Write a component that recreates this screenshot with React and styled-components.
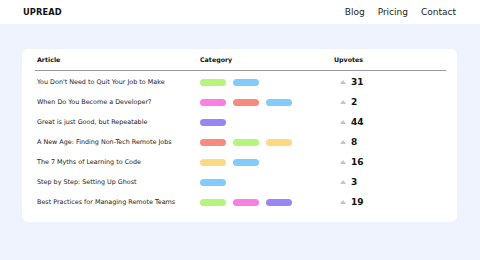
import React from "react";
import styled, { createGlobalStyle } from "styled-components";

const Global = createGlobalStyle`
  html, body { margin: 0; padding: 0; }
  body {
    background: #eff3fd;
    font-family: "DejaVu Sans", "Open Sans", sans-serif;
    color: #111;
    width: 480px;
    height: 260px;
    overflow: hidden;
  }
`;

const Header = styled.header`
  height: 24px;
  background: #fff;
  display: flex;
  align-items: center;
  justify-content: space-between;
  padding: 0 24px 0 23px;
`;

const Logo = styled.div`
  font-weight: 700;
  font-size: 8.3px;
  letter-spacing: 0.1px;
`;

const Nav = styled.nav`
  display: flex;
  gap: 13px;
  font-size: 9px;
  color: #222;
`;

const Main = styled.main`
  padding: 25px 23px 0 22px;
`;

const Card = styled.section`
  background: #fff;
  border-radius: 6px;
  padding: 0 11px 10px 13px;
`;

const Row = styled.div`
  display: grid;
  grid-template-columns: 163px 134px 1fr;
  align-items: center;
  height: ${(p) => (p.$head ? "21px" : "20px")};
  padding-left: 2px;
  ${(p) => p.$head && "border-bottom: 1px solid #9a9a9a; margin-bottom: 1px;"}
`;

const HeadCell = styled.div`
  font-size: 6.3px;
  font-weight: 700;
`;

const Title = styled.div`
  font-size: 6.4px;
  color: #1a1a1a;
  white-space: nowrap;
`;

const Tags = styled.div`
  display: flex;
  gap: 7px;
`;

const Pill = styled.span`
  width: 26px;
  height: 7px;
  border-radius: 4px;
  background: ${(p) => p.$c};
`;

const Votes = styled.div`
  display: flex;
  align-items: center;
  gap: 5px;
  padding-left: 6px;
`;

const Arrow = styled.span`
  width: 0;
  height: 0;
  border-left: 3.5px solid transparent;
  border-right: 3.5px solid transparent;
  border-bottom: 4px solid #c4c4c4;
`;

const Count = styled.span`
  font-size: 9px;
  font-weight: 700;
`;

const C = {
  green: "#b5f57c",
  blue: "#82cbfc",
  pink: "#fb7fe1",
  red: "#f88a7f",
  purple: "#9b85f5",
  yellow: "#fdd983",
};

const rows = [
  ["You Don't Need to Quit Your Job to Make", ["green", "blue"], 31],
  ["When Do You Become a Developer?", ["pink", "red", "blue"], 2],
  ["Great is just Good, but Repeatable", ["purple"], 44],
  ["A New Age: Finding Non-Tech Remote Jobs", ["red", "green", "yellow"], 8],
  ["The 7 Myths of Learning to Code", ["yellow", "blue"], 16],
  ["Step by Step: Setting Up Ghost", ["blue"], 3],
  ["Best Practices for Managing Remote Teams", ["green", "pink", "purple"], 19],
];

export default function App() {
  return (
    <>
      <Global />
      <Header>
        <Logo>UPREAD</Logo>
        <Nav>
          <span>Blog</span>
          <span>Pricing</span>
          <span>Contact</span>
        </Nav>
      </Header>
      <Main>
        <Card>
          <Row $head>
            <HeadCell>Article</HeadCell>
            <HeadCell>Category</HeadCell>
            <HeadCell>Upvotes</HeadCell>
          </Row>
          {rows.map(([t, tags, n]) => (
            <Row key={t}>
              <Title>{t}</Title>
              <Tags>
                {tags.map((c, i) => (
                  <Pill key={i} $c={C[c]} />
                ))}
              </Tags>
              <Votes>
                <Arrow />
                <Count>{n}</Count>
              </Votes>
            </Row>
          ))}
        </Card>
      </Main>
    </>
  );
}
